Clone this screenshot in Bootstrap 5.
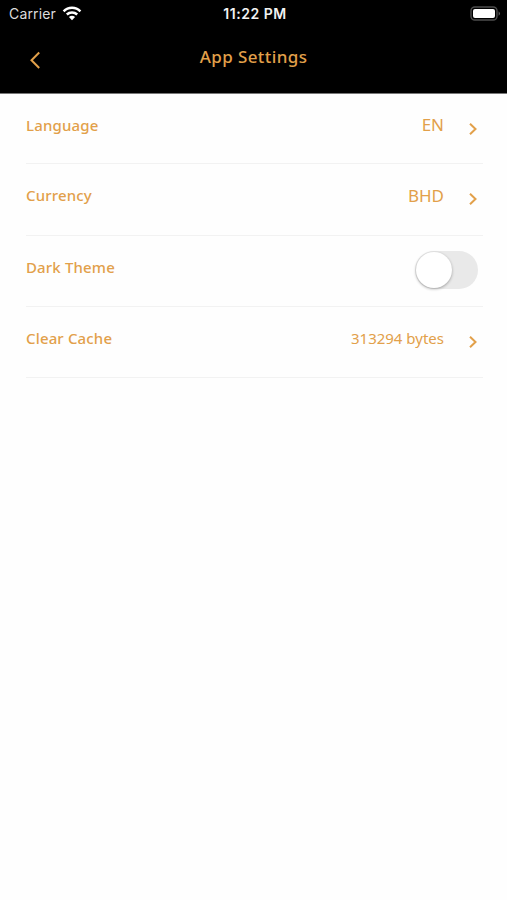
<!DOCTYPE html>
<html lang="en">
<head>
<meta charset="utf-8">
<meta name="viewport" content="width=device-width, initial-scale=1">
<title>App Settings</title>
<link href="https://cdn.jsdelivr.net/npm/bootstrap@5.3.0/dist/css/bootstrap.min.css" rel="stylesheet">
<style>
  body { font-family: "Noto Sans", sans-serif; color: #e2a04a; background: #fefefe; min-height: 900px; }
  .app-top { height: 94px; background: #000; border-bottom: 1px solid #777; }
  .status-bar { height: 28px; padding: 0 6px 0 9px; font-family: Inter, sans-serif; font-size: 14px; line-height: 28px; color: #dcdcdc; }
  .status-bar > div { flex: 1 1 0; }
  .carrier { letter-spacing: .15px; }
  .wifi { margin-left: 6px; }
  .clock { font-size: 14px; font-weight: 600; letter-spacing: .55px; color: #f2f2f2; }
  .title-bar { height: 60px; padding: 0 28px; }
  .title-bar h1 { font-size: 17px; line-height: 24px; font-weight: 500; letter-spacing: .4px; padding-bottom: 2px; }
  .side-slot { width: 16px; }
  .settings-list { padding: 0 24px 0 26px; }
  .setting { height: 71px; padding: 0 4px 8px 0; border-bottom: 1px solid #f2f2f2; }
  .setting:first-child { height: 70px; padding-bottom: 7px; }
  .setting:nth-child(2) { height: 72px; }
  .setting-name { font-size: 15px; font-weight: 500; letter-spacing: .15px; }
  .setting-value { font-size: 17px; margin-right: 23px; }
  .bytes { font-size: 15px; letter-spacing: 0; }
  .arrow { margin-top: 7px; }
  .toggle { width: 63px; height: 38px; border-radius: 19px; background: #e9e9e9; padding: 1px; margin: 6px 1px 0 0; }
  .knob { width: 36px; height: 36px; border-radius: 50%; background: #fff; box-shadow: 0 1px 3px rgba(0,0,0,.32); }
</style>
<script src="https://cdn.jsdelivr.net/npm/bootstrap@5.3.0/dist/js/bootstrap.bundle.min.js"></script>
</head>
<body>
<header class="app-top">
  <div class="status-bar d-flex align-items-center">
    <div class="d-flex align-items-center">
      <span class="carrier">Carrier</span>
      <svg class="wifi" width="20" height="16" viewBox="0 0 20 16" fill="none" stroke="#fff" stroke-width="2.5">
        <path d="M1.6 5.4C6.3.6 13.7.6 18.4 5.4M4.8 8.5C7.8 5.7 12.2 5.7 15.2 8.5"/>
        <path d="M10 14.2 6.9 11Q10 8.6 13.1 11Z" fill="#fff" stroke="none"/>
      </svg>
    </div>
    <div class="clock text-center text-nowrap">11:22 PM</div>
    <div class="d-flex justify-content-end">
      <svg width="31" height="16" viewBox="0 0 31 16">
        <rect x="1" y="1" width="26" height="13" rx="3.8" fill="#000" stroke="#4d4d4d" stroke-width="1.4"/>
        <rect x="3" y="3" width="22" height="9" rx="2" fill="#fff"/>
        <path d="M28.6 5.2Q31.3 7.5 28.6 9.8Z" fill="#666"/>
      </svg>
    </div>
  </div>
  <div class="title-bar d-flex align-items-center justify-content-between">
    <svg class="side-slot mt-1" width="16" height="20" viewBox="0 0 16 20" fill="none" stroke="#e2a04a" stroke-width="2"><path d="M11.2 2.5 3.5 10.2 11.2 18"/></svg>
    <h1 class="mb-0">App Settings</h1>
    <span class="side-slot"></span>
  </div>
</header>
<main class="settings-list">
  <div class="setting d-flex align-items-center">
    <span class="setting-name me-auto">Language</span>
    <span class="setting-value">EN</span>
    <svg class="arrow" width="12" height="14" viewBox="0 0 12 14" fill="none" stroke="#e2a04a" stroke-width="2"><path d="M3 1.8 8.5 7 3 12.2"/></svg>
  </div>
  <div class="setting d-flex align-items-center">
    <span class="setting-name me-auto">Currency</span>
    <span class="setting-value">BHD</span>
    <svg class="arrow" width="12" height="14" viewBox="0 0 12 14" fill="none" stroke="#e2a04a" stroke-width="2"><path d="M3 1.8 8.5 7 3 12.2"/></svg>
  </div>
  <div class="setting d-flex align-items-center">
    <span class="setting-name me-auto">Dark Theme</span>
    <div class="toggle" role="switch" aria-checked="false" aria-label="Dark Theme"><div class="knob"></div></div>
  </div>
  <div class="setting d-flex align-items-center">
    <span class="setting-name me-auto">Clear Cache</span>
    <span class="setting-value bytes">313294 bytes</span>
    <svg class="arrow" width="12" height="14" viewBox="0 0 12 14" fill="none" stroke="#e2a04a" stroke-width="2"><path d="M3 1.8 8.5 7 3 12.2"/></svg>
  </div>
</main>
</body>
</html>
